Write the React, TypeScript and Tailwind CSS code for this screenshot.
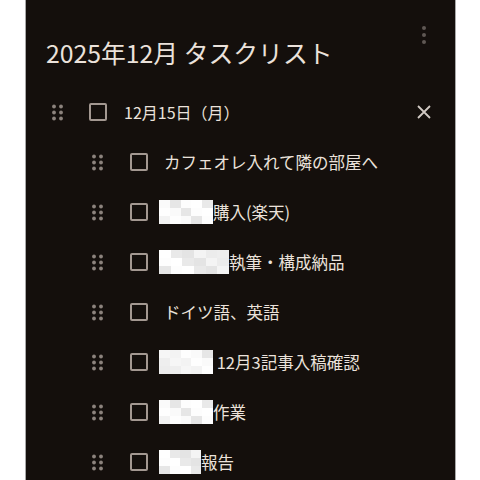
import React from "react";

type Task = {
  text: string;
  mask?: number; // width of the blurred block in px
};

const tasks: Task[] = [
  { text: "カフェオレ入れて隣の部屋へ" },
  { text: "購入(楽天)", mask: 54 },
  { text: "執筆・構成納品", mask: 70 },
  { text: "ドイツ語、英語" },
  { text: " 12月3記事入稿確認", mask: 54 },
  { text: "作業", mask: 54 },
  { text: "報告", mask: 42 },
];

const shades = [
  "bg-[#f6f6f6]",
  "bg-[#fdfdfd]",
  "bg-[#ececec]",
  "bg-[#fafafa]",
  "bg-[#e4e4e4]",
  "bg-[#f3f3f3]",
  "bg-[#ffffff]",
  "bg-[#eeeeee]",
  "bg-[#e6e6e6]",
  "bg-[#f4f4f4]",
  "bg-[#fefefe]",
  "bg-[#e9e9e9]",
];

const Mosaic = ({ width, seed }: { width: number; seed: number }) => {
  const cols = Math.max(1, Math.round(width / 11));
  return (
    <div className="flex h-[25px] shrink-0 overflow-hidden" style={{ width }}>
      {Array.from({ length: cols }).map((_, c) => (
        <div key={c} className="flex flex-1 flex-col">
          {[0, 1, 2].map((r) => (
            <div
              key={r}
              className={`flex-1 ${shades[(c * 5 + r * 7 + seed * 3) % shades.length]}`}
            />
          ))}
        </div>
      ))}
    </div>
  );
};

const DragHandle = () => (
  <svg width="11" height="17" viewBox="0 0 11 17" className="shrink-0">
    {[2.5, 8.5, 14.5].map((cy) =>
      [2, 9].map((cx) => (
        <circle key={`${cx}-${cy}`} cx={cx} cy={cy} r="1.9" fill="#8c837d" />
      ))
    )}
  </svg>
);

const CheckBox = () => (
  <div className="size-[18px] shrink-0 rounded-[2px] border-2 border-[#a39891]" />
);

const App = () => {
  return (
    <div className="h-[480px] overflow-hidden bg-white">
      <div
        className="ml-[25px] h-[480px] w-[431px] border-x border-[#a8a8a8] bg-[#140f0c] text-[#ebe2db]"
        style={{ fontFamily: '"Noto Sans CJK JP", "Noto Sans", sans-serif' }}
      >
        {/* ヘッダー */}
        <div className="flex h-[87px] justify-between pl-[20px] pr-[29px]">
          <h1 className="pt-[37px] text-[24.8px] leading-[30px] font-normal">
            2025年12月 タスクリスト
          </h1>
          <div className="mt-[26px] flex flex-col gap-[3px]">
            <span className="size-[4px] rounded-full bg-[#5f5854]" />
            <span className="size-[4px] rounded-full bg-[#5f5854]" />
            <span className="size-[4px] rounded-full bg-[#5f5854]" />
          </div>
        </div>

        {/* 親タスク */}
        <div className="flex h-[50px] items-center pl-[26px] pr-[23px]">
          <DragHandle />
          <div className="ml-[26px]">
            <CheckBox />
          </div>
          <span className="ml-[17px] text-[16px] leading-none">12月15日（月）</span>
          <svg width="16" height="16" viewBox="0 0 16 16" className="ml-auto">
            <path d="M2 2 L14 14 M14 2 L2 14" stroke="#d2cac4" strokeWidth="1.8" />
          </svg>
        </div>

        {/* サブタスク */}
        {tasks.map((task, i) => (
          <div key={i} className="flex h-[50px] items-center pl-[66px]">
            <DragHandle />
            <div className="ml-[27px]">
              <CheckBox />
            </div>
            <div className="ml-[11px] flex items-center">
              {task.mask ? (
                <Mosaic width={task.mask} seed={i} />
              ) : (
                <span className="w-[5px]" />
              )}
              <span className="text-[16.5px] leading-none whitespace-pre">{task.text}</span>
            </div>
          </div>
        ))}
      </div>
    </div>
  );
};

export default App;
